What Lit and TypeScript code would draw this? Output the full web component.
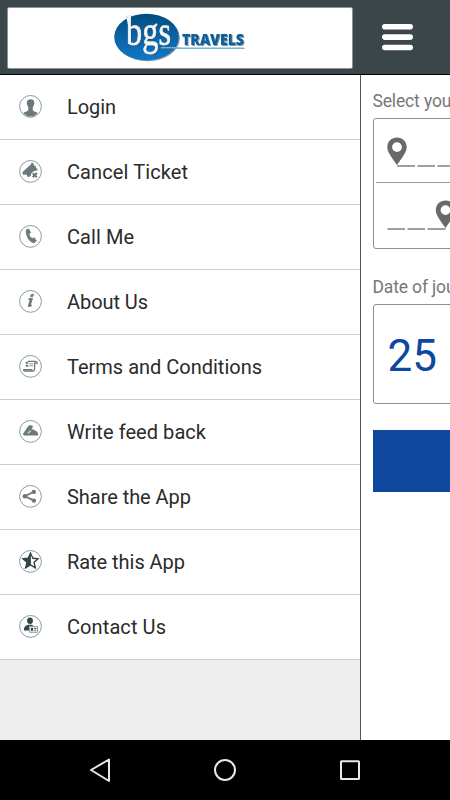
import { LitElement, html, svg, css } from "lit";
import { customElement } from "lit/decorators.js";

const items = [
  { label: "Login", width: 49, icon: svg`<path d="M11.6 4.2c2.5 0 3.9 1.5 3.7 3.9-.1 2-.8 3-1.5 4.100v3c.8 1.300 3.200 1.600 5 2.700-2.200 2.500-4.600 3.600-7.300 3.600s-5.300-1.200-7.400-3.600c1.700-1.100 4.400-1.400 5.200-2.700v-3c-.8-1.100-1.400-2.100-1.500-4.100-.1-2.400 1.300-3.900 3.800-3.900z"/>` },
  { label: "Cancel Ticket", width: 121, icon: svg`<path d="M3.300 12.300 12 4.200l.4-1.400 1.900.3.600 2.400 1.800.6.300 1.900 1.800 1.300-.7 1.200-3 .5-2.800 2.200-.3 2.300-2.300 1.800-1.300-.7-.9-2-3.300.1z"/><path class="line" stroke-width="2" d="m13.700 13.200 4.200 4m0-4.200-4.200 4.300"/>` },
  { label: "Call Me", width: 67, icon: svg`<path stroke="currentColor" stroke-width=".5" d="m7.400 4.800 2.200-1 2.200 3.600-1.700 1.500c.4 2.100 1.500 3.500 3.100 4.500l1.900-.8 2.300 3.100-1.500 1.800c-2.200.9-4.400-.8-6.100-3-2-2.700-3.400-7.400-2.400-9.700z"/>` },
  { label: "About Us", width: 81, icon: svg`<path stroke="currentColor" stroke-width=".9" d="m12.200 4.500 2.300-.2-.6 2.100-2.300.1zM10 8.600l3.500-.4-2.200 7.100 1.200-.3-.3 1.100-3 .5 2-6.900-1.500-.2z"/>` },
  { label: "Terms and Conditions", width: 195, icon: svg`<path class="line" stroke-width="1.300" d="M9 6.300h7.500q1.700.1 1.800 1.900h-2.700v6.300q-.2 1.700-1.700 1.700H6q-1.300-.1-1.400-1.600h8.200q-.1 1.500 1.100 1.500"/><path d="M6.700 6.800h2.500v2H6.700zm0 2.900h2.500v2.100H6.700zm3.500-1.200h4v.8h-4zm0 1.900h4v.8h-4z"/>` },
  { label: "Write feed back", width: 139, icon: svg`<path stroke="currentColor" stroke-width=".4" fill-rule="evenodd" d="m4 14.200 5.200-7.900 2-1.200.6.900 1.200-.6.900 1-1.600 2.600 2.100.8 3.900 2.300.8 3.200H5zm5.100-1.900-.8 1.400 1.600-.1 2.400-2.800-.9-.6z"/>` },
  { label: "Share the App", width: 124, icon: svg`<path class="line" stroke-width="1.800" d="m15 6.800-9.300 4.500 9.500 4.300"/><circle cx="5.900" cy="11.300" r="2.300"/><circle cx="14.800" cy="6.900" r="2.200"/><circle cx="14.900" cy="15.600" r="2.200"/>` },
  { label: "Rate this App", width: 118, dark: true, icon: svg`<path fill-rule="evenodd" d="m11.500 1.500 2.700 6.100 6.500.6-4.900 4.400 1.600 6.600-5.900-3.500-5.900 3.500 1.600-6.600-4.900-4.400 6.500-.6zm.4 3.700v9l3.300 2-.9-4.200 3-2.700-3.900-.4z"/>` },
  { label: "Contact Us", width: 99, dark: true, icon: svg`<ellipse cx="11" cy="5.700" rx="2.900" ry="3.300"/><path d="M4.800 15.500c.1-3.400 1.500-5 4.300-5.700h3.700l2.100 1.100H10v4.600z"/><path class="card" d="M10.600 11.600h8v5.700h-8z"/><path d="M12 13h2v2.700h-2zm3.200 0h2.300v.8h-2.300zm0 1.700H17v.8h-1.800z"/>` },
];

const pin = svg`<path fill-rule="evenodd" d="M10 0c5.500 0 9.700 4 9.700 9.500 0 4.500-3.200 8.800-9.700 18C3.500 18.300.3 14 .3 9.500.3 4 4.500 0 10 0zm0 4.700a4.900 4.900 0 1 0 0 9.800 4.900 4.900 0 0 0 0-9.800z"/>`;

@customElement("app-root")
class AppRoot extends LitElement {
  static styles = css`
    :host { display: flex; flex-direction: column; width: 450px; height: 800px; overflow: hidden; background: #fff; font-family: Roboto, sans-serif; }
    * { box-sizing: border-box; }
    svg { display: block; }
    header { display: flex; flex: none; height: 75px; background: #3b464a; border-bottom: 1px solid #000; padding: 7px 0 0 7px; }
    .brand { width: 346px; height: 62px; background: #fff; border: 1px solid #8b9294; border-radius: 2px; }
    .bars { margin: 16px 0 0 28px; }
    main { display: flex; flex: none; height: 665px; }
    .drawer { width: 361px; flex: none; background: #eee; border-right: 1px solid #555; }
    .item { display: flex; height: 65px; background: #fff; border-bottom: 1px solid #cdcdcd; padding-left: 19px; }
    .item .ico { flex: none; margin-top: 20px; width: 23px; height: 23px; fill: #6b787c; stroke: none; color: #6b787c; }
    .item .ico.dark { fill: #34444b; color: #34444b; }
    .ring { fill: none; stroke: #8d989b; stroke-width: 1; }
    .line { fill: none; stroke: currentColor; }
    .card { fill: #e8ebec; stroke: #7c888c; stroke-width: .8; }
    .label { margin-left: 25px; fill: #2b2b2b; font-size: 20px; overflow: visible; }
    .page { flex: none; width: 400px; padding-left: 11.500px; color: #777; }
    .cap { height: 43px; line-height: 52px; font-size: 17.500px; letter-spacing: -.15px; white-space: nowrap; }
    .places { height: 131px; border: 1px solid #8d8d8d; border-radius: 3px; }
    .place { height: 63px; margin-left: 2px; }
    .place + .place { border-top: 1px solid #999; }
    .place svg { fill: #696969; }
    .dash { stroke: #808080; stroke-width: 1.500; }
    .cap.second { height: 55px; line-height: 76px; }
    .date { height: 100px; border: 1px solid #8d8d8d; border-radius: 3px; padding-left: 14px; font-size: 44px; line-height: 102px; color: #0d47a1; }
    .go { height: 62px; margin-top: 25.500px; background: #10479f; }
    nav { flex: none; height: 60px; background: #000; }
    nav svg { fill: none; stroke: #e8e8e8; stroke-width: 2; }
  `;

  render() {
    return html`
      <header>
        <div class="brand">
          <svg width="344" height="60" viewBox="8 8 344 60">
            <defs>
              <linearGradient id="g" x1="0" y1="0" x2="0" y2="1"><stop offset="0" stop-color="#064d80"/><stop offset="1" stop-color="#0878c8"/></linearGradient>
              <filter id="s" x="-20%" y="-20%" width="150%" height="150%"><feDropShadow dx="1" dy="1" stdDeviation=".7" flood-color="#345" flood-opacity=".6"/></filter>
            </defs>
            <ellipse cx="146.500" cy="37" rx="32.300" ry="23.200" fill="url(#g)" filter="url(#s)"/>
            <path d="m124 14 6.500-1v7l-2.500 5-1.300-6.500-3 1z" fill="#fff"/>
            <path d="M161 47.600c8-.8 14 .7 22 .7h61" fill="none" stroke="#6fb4df" stroke-width="1.600" filter="url(#s)"/>
            <text transform="translate(126 45.300) scale(.75 1)" font-family="Liberation Serif, serif" font-size="43" textLength="60" fill="#f3f6f8" stroke="#f3f6f8" stroke-width=".6" filter="url(#s)">bgs</text>
            <text x="182" y="45.300" font-family="Open Sans, sans-serif" font-weight="800" font-size="15" textLength="62" lengthAdjust="spacingAndGlyphs" fill="#07609c" filter="url(#s)">TRAVELS</text>
          </svg>
        </div>
        <svg class="bars" width="34" height="30"><g fill="#fff"><rect x="1" y="1" width="31" height="5.600" rx="2.800"/><rect x="1" y="11.300" width="31" height="5.600" rx="2.800"/><rect x="1" y="21.700" width="31" height="5.600" rx="2.800"/></g></svg>
      </header>
      <main>
        <div class="drawer">
          ${items.map((i) => html`
            <div class="item">
              <svg class="ico ${i.dark ? "dark" : ""}" viewBox="0 0 23 23"><circle class="ring" cx="11.500" cy="11.400" r="10.900"/>${i.icon}</svg>
              <svg class="label" width="280" height="64"><text x="0" y="39" textLength=${i.width}>${i.label}</text></svg>
            </div>`)}
        </div>
        <div class="page">
          <div class="cap">Select you</div>
          <div class="places">
            <div class="place"><svg width="150" height="62"><g transform="translate(11 18.500)">${pin}</g><path class="dash" d="M21 47h18m2.500 0h17.500m2.500 0h18"/></svg></div>
            <div class="place"><svg width="150" height="63"><g transform="translate(59.500 17.500)">${pin}</g><path class="dash" d="M11.500 46h17.500m2.500 0h17.500m2.500 0h18"/></svg></div>
          </div>
          <div class="cap second">Date of jou</div>
          <div class="date">25</div>
          <div class="go"></div>
        </div>
      </main>
      <nav>
        <svg width="450" height="60"><path d="M109 19.500v21.500L91 30z" stroke-linejoin="round"/><circle cx="225" cy="30" r="10"/><rect x="341" y="21.200" width="18" height="17.800" rx=".5"/></svg>
      </nav>`;
  }
}
